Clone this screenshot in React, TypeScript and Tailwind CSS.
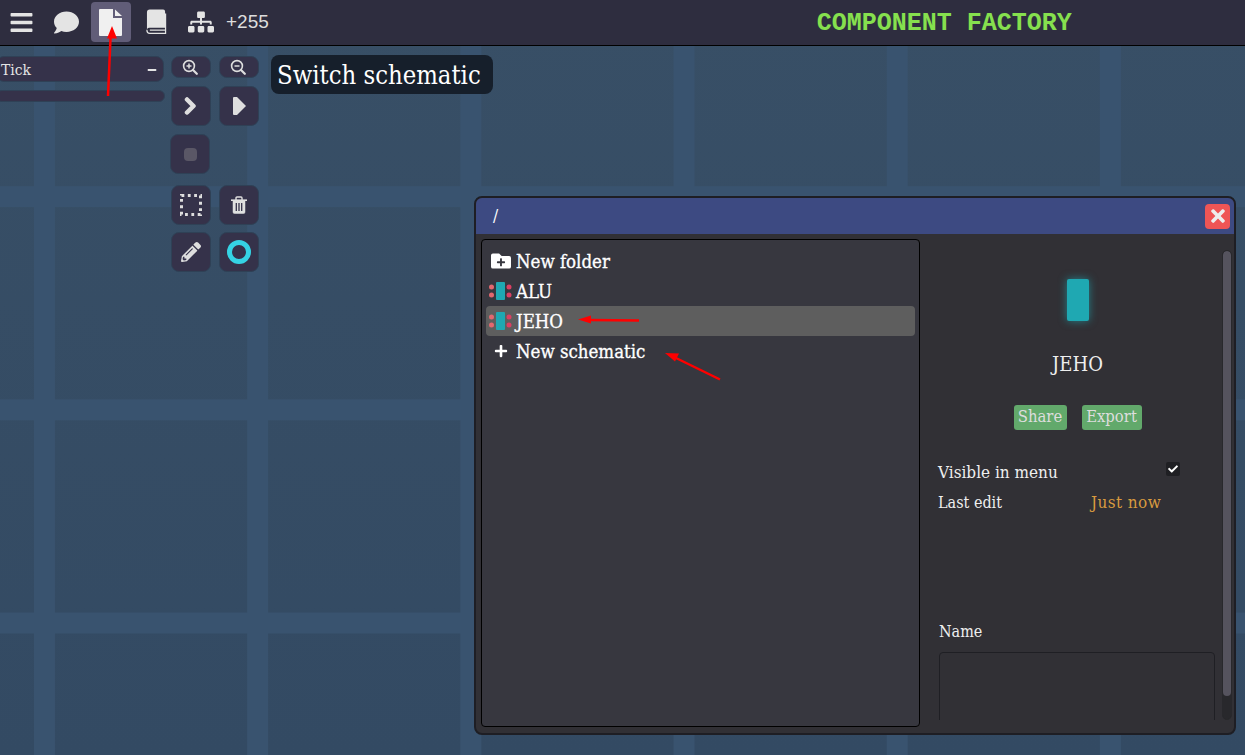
import { ReactNode } from 'react';
import { FaBars, FaComment, FaSitemap, FaPencilAlt, FaFolderPlus, FaPlus, FaTimes, FaCheck, FaMinus } from 'react-icons/fa';

const slab = 'font-["DejaVu_Serif",serif] font-stretch-condensed';

function FileIcon() {
    return (
        <svg width="24" height="27" viewBox="0 0 24 27" fill="#f0f0f0">
            <path d="M1 0h13v9h9v17a1 1 0 0 1-1 1H1a1 1 0 0 1-1-1V1a1 1 0 0 1 1-1z" />
            <path d="M16 0.5l7 6.5h-7z" />
        </svg>
    );
}

function BookIcon() {
    return (
        <svg width="21" height="26" viewBox="0 0 22 26" fill="none">
            <path d="M4 0h14a2 2 0 0 1 2 2v17H4a3 3 0 0 0-3 1.5V3a3 3 0 0 1 3-3z" fill="#e4e4e4" />
            <path d="M1 21v1a3 3 0 0 0 3 3h16.5V4M4 21.500h16" stroke="#e4e4e4" strokeWidth="1.300" />
        </svg>
    );
}

function MagnifierIcon({ plus }: { plus?: boolean }) {
    return (
        <svg width="16" height="16" viewBox="0 0 16 16" fill="none" stroke="#dedede" className="-ml-[2px] -mt-px">
            <circle cx="7" cy="7" r="5.400" strokeWidth="1.600" />
            <path d="M11 11l3.800 3.800" strokeWidth="2.200" strokeLinecap="round" />
            <path d={plus ? 'M4.500 7h5M7 4.500v5' : 'M4.500 7h5'} strokeWidth="1.500" />
        </svg>
    );
}

function ChevronIcon() {
    return (
        <svg width="14" height="18" viewBox="0 0 14 18" fill="none" stroke="#dedede">
            <path d="M3 2.500L9.500 9L3 15.500" strokeWidth="4.500" strokeLinecap="round" strokeLinejoin="round" />
        </svg>
    );
}

function StepIcon() {
    return (
        <svg width="13" height="18" viewBox="0 0 13 18" fill="#dedede">
            <path d="M0 1a1 1 0 0 1 1-1h3l9 9-9 9H1a1 1 0 0 1-1-1z" />
        </svg>
    );
}

function TrashIcon() {
    return (
        <svg width="16" height="18" viewBox="0 0 16 18" fill="none" stroke="#e0e0e0">
            <path d="M0 4.200h16" strokeWidth="1.600" />
            <path d="M5 4V2a1 1 0 0 1 1-1h4a1 1 0 0 1 1 1v2" strokeWidth="1.400" />
            <path d="M2 4v12a1.500 1.500 0 0 0 1.500 1.500h9A1.500 1.500 0 0 0 14 16V4" fill="#e0e0e0" strokeWidth="0.500" />
            <path d="M5.300 7v8M8 7v8M10.700 7v8" stroke="#35324a" strokeWidth="1.300" />
        </svg>
    );
}

function SelectIcon() {
    return (
        <svg width="22" height="22" viewBox="0 0 22 22" fill="none">
            <rect x="1.500" y="1.500" width="19" height="19" stroke="#dedede" strokeWidth="3" strokeDasharray="2.800 3.533" />
        </svg>
    );
}

function ComponentIcon() {
    return (
        <svg width="24" height="20" viewBox="0 0 24 20" className="-ml-[2px]">
            <circle cx="3.500" cy="6" r="2.500" fill="#e2686f" />
            <circle cx="3.500" cy="14" r="2.500" fill="#e2686f" />
            <circle cx="21" cy="6" r="2.500" fill="#dc3f63" />
            <circle cx="21" cy="14" r="2.500" fill="#dc3f63" />
            <rect x="8" y="1" width="9" height="18" rx="1" fill="#1fa8b2" />
        </svg>
    );
}

function TopButton({ active, children }: { active?: boolean; children: ReactNode }) {
    return (
        <div className={`w-10 h-10 rounded flex items-center justify-center text-[#e4e4e4] ${active ? 'bg-[#615d78]' : ''}`}>
            {children}
        </div>
    );
}

function ToolButton({ children, className = '' }: { children: ReactNode; className?: string }) {
    return (
        <div className={`w-10 h-10 rounded-lg bg-[#35324a] border border-[#2f4156] flex items-center justify-center text-[#dedede] ${className}`}>
            {children}
        </div>
    );
}

function ZoomButton({ children }: { children: ReactNode }) {
    return (
        <div className="w-10 h-[22px] rounded-lg bg-[#35324a] border border-[#2f4156] flex items-center justify-center">
            {children}
        </div>
    );
}

function FileRow({ icon, label, selected }: { icon: ReactNode; label: string; selected?: boolean }) {
    return (
        <div className={`h-[30px] flex items-center rounded-sm ${selected ? 'bg-[#5e5e5e]' : ''}`}>
            <div className="w-[30px] flex justify-center text-white shrink-0">{icon}</div>
            <span className="text-[18.500px] leading-[28px] pt-[2px] text-white [-webkit-text-stroke:0.300px_#ffffff]">{label}</span>
        </div>
    );
}

function Arrows() {
    return (
        <svg className="absolute inset-0 pointer-events-none" width="1245" height="755" viewBox="0 0 1245 755" fill="#ff0000" stroke="none">
            <path d="M108 96L110.500 38" stroke="#ff0000" strokeWidth="2.500" />
            <path d="M112 26l5 12.500h-10z" />
            <path d="M639 320.500L590 320" stroke="#ff0000" strokeWidth="2.500" />
            <path d="M578 319.500l13-4v8z" />
            <path d="M720 379.500L676 358" stroke="#ff0000" strokeWidth="2.500" />
            <path d="M665 353l14 0.500-4 8z" />
        </svg>
    );
}

export default function App() {
    return (
        <div className={`relative w-[1245px] h-[755px] overflow-hidden ${slab}`}>
            {/* canvas grid */}
            <div className="absolute inset-0 bg-[#354c65] bg-[linear-gradient(90deg,#39536f_21px,transparent_21px),linear-gradient(#39536f_21px,transparent_21px),linear-gradient(#384f66,#334a63)] bg-[size:213.2px_213.2px,213.2px_213.2px,100%_100%] bg-[position:34px_0px,0px_-27px,0px_0px]" />

            {/* top bar */}
            <div className="relative h-[46px] bg-[#2e2d3f] border-b border-black flex items-center pl-px gap-[5px] pb-px">
                <TopButton><FaBars size={25} /></TopButton>
                <TopButton><FaComment size={25} /></TopButton>
                <TopButton active><FileIcon /></TopButton>
                <TopButton><BookIcon /></TopButton>
                <TopButton><FaSitemap size={26} /></TopButton>
                <span className="font-['Liberation_Sans',sans-serif] text-[19px] text-[#dddddd] mt-px">+255</span>
                <span className="ml-[543px] mt-[3px] font-['Liberation_Mono',monospace] font-bold text-[25px] text-[#86e04e]">COMPONENT FACTORY</span>
            </div>

            {/* simulation controls */}
            <div className="absolute left-[-4px] top-[56px] flex gap-[7px]">
                <div className="w-[168px] flex flex-col gap-2">
                    <div className="h-[26px] rounded-lg bg-[#35324a] border border-[#2f4156] flex items-center justify-between pl-1 pr-[6px] text-[15.500px] text-[#e4e4e4]">
                        <span className="pt-[3px]">Tick</span>
                        <FaMinus size={10} className="mt-[2px]" />
                    </div>
                    <div className="h-3 -mr-px rounded-md bg-[#35324a] border border-[#2f4156]" />
                </div>
                <div className="flex flex-col">
                    <div className="flex gap-2">
                        <ZoomButton><MagnifierIcon plus /></ZoomButton>
                        <ZoomButton><MagnifierIcon /></ZoomButton>
                    </div>
                    <div className="flex gap-2 mt-2">
                        <ToolButton><ChevronIcon /></ToolButton>
                        <ToolButton><StepIcon /></ToolButton>
                    </div>
                    <ToolButton className="mt-2 -ml-px">
                        <div className="w-[13px] h-[13px] rounded-sm bg-[#5a5766]" />
                    </ToolButton>
                    <div className="flex gap-2 mt-[11px]">
                        <ToolButton><SelectIcon /></ToolButton>
                        <ToolButton><TrashIcon /></ToolButton>
                    </div>
                    <div className="flex gap-2 mt-[7px]">
                        <ToolButton><FaPencilAlt size={20} /></ToolButton>
                        <ToolButton>
                            <div className="w-[24px] h-[24px] rounded-full border-[5px] border-[#35d3e4]" />
                        </ToolButton>
                    </div>
                </div>
            </div>

            {/* tooltip */}
            <div className="absolute left-[271px] top-[55px] w-[222px] h-[39px] rounded-lg bg-[#161f2b] pl-[6px] pt-[2px] flex items-center text-[25.400px] text-white whitespace-nowrap">
                Switch schematic
            </div>

            {/* schematic window */}
            <div className="absolute left-[474px] top-[196px] w-[762px] h-[539px] rounded-lg border-2 border-[#1e1e24] bg-[#313035] overflow-hidden flex flex-col">
                <div className="h-[36px] shrink-0 bg-[#3d4a82] flex items-center justify-between pl-[17px] pr-1 text-white text-[17px]">
                    <span>/</span>
                    <div className="w-[25px] h-[25px] rounded bg-[#ef5555] flex items-center justify-center text-[#eeeeee]">
                        <FaTimes size={20} />
                    </div>
                </div>
                <div className="flex-1 flex min-h-0 pl-[5px] pt-[5px] pb-[6px]">
                    <div className="w-[439px] rounded border border-black bg-[#37373f] px-1 pt-[6px]">
                        <FileRow icon={<FaFolderPlus size={20} />} label="New folder" />
                        <FileRow icon={<ComponentIcon />} label="ALU" />
                        <FileRow icon={<ComponentIcon />} label="JEHO" selected />
                        <FileRow icon={<FaPlus size={14} />} label="New schematic" />
                    </div>
                    <div className="flex-1 flex min-w-0 pt-[11px] pb-[7px]">
                        <div className="flex-1 flex flex-col items-center overflow-hidden text-[#eeeeee] pl-[18px] pr-[7px]">
                            <div className="w-[22px] h-[42px] mt-[29px] ml-[2px] shrink-0 rounded-[2px] bg-[#1fa8b2] shadow-[0_0_8px_#1fa8b2aa]" />
                            <div className="mt-[30px] ml-[2px] shrink-0 text-[20px] leading-[26px]">JEHO</div>
                            <div className="flex gap-[15px] mt-[28px] ml-[2px] shrink-0 text-[16.500px] text-[#dddddd]">
                                <div className="h-[25px] w-[53px] rounded-[3px] bg-[#62a96b] flex items-center justify-center">Share</div>
                                <div className="h-[25px] w-[60px] rounded-[3px] bg-[#62a96b] flex items-center justify-center">Export</div>
                            </div>
                            <div className="w-full shrink-0 mt-[27px]">
                                <div className="h-[30px] flex items-center justify-between text-[17px]">
                                    <span className="pt-[2px]">Visible in menu</span>
                                    <div className="w-[14px] h-[14px] mr-[35px] -mt-[6px] rounded-[2px] bg-[#1f1f23] flex items-center justify-center text-white">
                                        <FaCheck size={10} />
                                    </div>
                                </div>
                                <div className="h-[30px] flex items-center">
                                    <span className="w-[153px] text-[16px] pt-[2px]">Last edit</span>
                                    <span className="text-[17px] tracking-[0.400px] pt-[2px] text-[#d89a3f]">Just now</span>
                                </div>
                            </div>
                            <div className="w-full shrink-0 text-[16px] leading-6 mt-[103px] pl-px">Name</div>
                            <div className="w-[276px] ml-px h-[200px] mt-[8px] shrink-0 rounded-sm border border-[#1f1f24] bg-[#313035]" />
                        </div>
                        <div className="w-[10px] mr-[2px] rounded-md bg-[#28282c] border border-[#28282c] overflow-hidden shrink-0">
                            <div className="h-[445px] rounded-md bg-[#55535e]" />
                        </div>
                    </div>
                </div>
            </div>

            <Arrows />
        </div>
    );
}
